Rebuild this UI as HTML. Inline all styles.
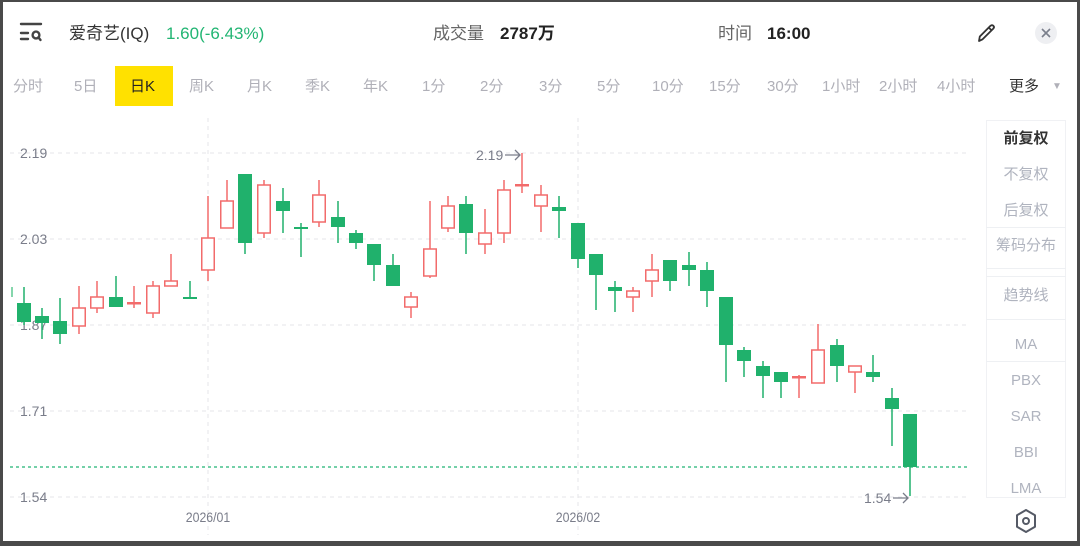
<!DOCTYPE html>
<html><head><meta charset="utf-8">
<style>
*{margin:0;padding:0;box-sizing:border-box}
html,body{width:1080px;height:546px;overflow:hidden;background:#fff}
body{font-family:"Liberation Sans","Noto Sans CJK SC",sans-serif;position:relative}
.frame{position:absolute;left:0;top:0;width:1080px;height:546px;border:3px solid #4a4a4a;border-bottom-width:5px;border-top-width:2px;pointer-events:none}
.t{position:absolute;white-space:nowrap;line-height:1}
.tab{position:absolute;top:79px;font-size:15px;color:#b0b0b8;line-height:1;white-space:nowrap}
.side{position:absolute;left:986px;width:80px;text-align:center;font-size:15px;color:#b0b4bf;line-height:1}
.sep{position:absolute;left:986px;width:80px;height:1px;background:#eef0f3}
</style></head><body>
<svg class="t" style="left:18px;top:20px" width="26" height="24" viewBox="0 0 26 24">
<g stroke="#444" stroke-width="2.4" stroke-linecap="round" fill="none">
<line x1="3" y1="4" x2="23" y2="4"/><line x1="3" y1="13" x2="10" y2="13"/><line x1="3" y1="19" x2="10" y2="19"/>
<circle cx="18" cy="15" r="3.4"/><line x1="20.5" y1="17.5" x2="22.5" y2="20"/></g></svg>
<div class="t" style="left:69px;top:25px;font-size:17px;color:#333">爱奇艺(IQ)</div>
<div class="t" style="left:166px;top:25px;font-size:17px;color:#22b573">1.60(-6.43%)</div>
<div class="t" style="left:433px;top:25px;font-size:17px;color:#666">成交量</div>
<div class="t" style="left:500px;top:25px;font-size:17px;color:#222;font-weight:bold">2787万</div>
<div class="t" style="left:718px;top:25px;font-size:17px;color:#666">时间</div>
<div class="t" style="left:767px;top:25px;font-size:17px;color:#222;font-weight:bold">16:00</div>
<svg class="t" style="left:974px;top:21px" width="24" height="24" viewBox="0 0 24 24">
<path d="M5 20 L5.8 15.5 L16.5 4.8 Q18 3.5 19.4 4.8 Q20.6 6.2 19.3 7.6 L8.6 18.3 Z M14.8 6.6 L17.6 9.4" fill="none" stroke="#333" stroke-width="1.8" stroke-linejoin="round"/></svg>
<div class="t" style="left:1035px;top:22px;width:22px;height:22px;border-radius:50%;background:#eeeff2"></div>
<svg class="t" style="left:1040px;top:27px" width="12" height="12" viewBox="0 0 12 12"><path d="M2 2L10 10M10 2L2 10" stroke="#7a7f8c" stroke-width="1.6"/></svg>

<div class="t" style="left:115px;top:66px;width:58px;height:40px;background:#ffe100"></div>
<div class="tab" style="left:13px">分时</div>
<div class="tab" style="left:74px">5日</div>
<div class="tab" style="left:130px;color:#222">日K</div>
<div class="tab" style="left:189px">周K</div>
<div class="tab" style="left:247px">月K</div>
<div class="tab" style="left:305px">季K</div>
<div class="tab" style="left:363px">年K</div>
<div class="tab" style="left:422px">1分</div>
<div class="tab" style="left:480px">2分</div>
<div class="tab" style="left:539px">3分</div>
<div class="tab" style="left:597px">5分</div>
<div class="tab" style="left:652px">10分</div>
<div class="tab" style="left:709px">15分</div>
<div class="tab" style="left:767px">30分</div>
<div class="tab" style="left:822px">1小时</div>
<div class="tab" style="left:879px">2小时</div>
<div class="tab" style="left:937px">4小时</div>
<div class="tab" style="left:1009px;color:#333">更多</div>
<div class="tab" style="left:1052px;font-size:10px;top:82px">▼</div>

<svg class="t" style="left:0;top:0" width="980" height="546" viewBox="0 0 980 546">
<g stroke="#e6e6e9" stroke-width="1" stroke-dasharray="4 4">
<line x1="10" y1="153" x2="970" y2="153"/><line x1="10" y1="239" x2="970" y2="239"/>
<line x1="10" y1="325" x2="970" y2="325"/><line x1="10" y1="411" x2="970" y2="411"/>
<line x1="10" y1="497" x2="970" y2="497"/>
<line x1="208" y1="118" x2="208" y2="535"/><line x1="578" y1="118" x2="578" y2="535"/>
</g>
<g font-family="Liberation Sans, sans-serif" font-size="14" fill="#7a7d8a">
<text x="20" y="158">2.19</text><text x="20" y="244">2.03</text><text x="20" y="330">1.87</text>
<text x="20" y="416">1.71</text><text x="20" y="502">1.54</text>
<text transform="translate(208 522) scale(0.88 1)" text-anchor="middle">2026/01</text><text transform="translate(578 522) scale(0.88 1)" text-anchor="middle">2026/02</text>
<text x="476" y="160">2.19</text><text x="864" y="503">1.54</text>
</g>
<g fill="none" stroke="#7a7d8a" stroke-width="1.3">
<path d="M505 155 H520 M515 150 L520 155 L515 160"/>
<path d="M893 498 H908 M903 493 L908 498 L903 503"/>
</g>
<line x1="10" y1="467" x2="970" y2="467" stroke="#22b573" stroke-width="1.3" stroke-dasharray="3 3"/>
<g id="c"></g>
</svg>
<script>
var d=[[12,287,297,296,297,'g'],[24,287,325,303,322,'g'],[42,308,339,316,323,'g'],[60,298,344,321,334,'g'],[79,286,334,308,326,'r'],[97,281,313,297,308,'r'],[116,276,307,297,307,'g'],[134,286,308,302,304,'R'],[153,281,318,286,313,'r'],[171,254,286,281,286,'r'],[190,281,299,297,299,'g'],[208,196,281,238,270,'r'],[227,180,228,201,228,'r'],[245,174,254,174,243,'g'],[264,180,238,185,233,'r'],[283,188,233,201,211,'g'],[301,223,257,227,229,'g'],[319,180,227,195,222,'r'],[338,201,243,217,227,'g'],[356,230,249,233,243,'g'],[374,244,281,244,265,'g'],[393,254,286,265,286,'g'],[411,292,318,297,307,'r'],[430,201,278,249,276,'r'],[448,196,232,206,228,'r'],[466,196,254,204,233,'g'],[485,209,254,233,244,'r'],[504,180,243,190,233,'r'],[522,153,193,184,186,'R'],[541,185,232,195,206,'r'],[559,196,238,207,211,'g'],[578,223,268,223,259,'g'],[596,254,310,254,275,'g'],[615,281,312,287,291,'g'],[633,287,312,291,297,'r'],[652,254,297,270,281,'r'],[670,260,291,260,281,'g'],[689,252,286,265,270,'g'],[707,262,307,270,291,'g'],[726,297,382,297,345,'g'],[744,347,377,350,361,'g'],[763,361,398,366,376,'g'],[781,372,398,372,382,'g'],[799,375,398,376,378,'R'],[818,324,383,350,383,'r'],[837,339,382,345,366,'g'],[855,366,393,366,372,'r'],[873,355,382,372,377,'g'],[892,388,446,398,409,'g'],[910,414,496,414,467,'g']];
var s='';d.forEach(function(c,i){var x=c[0],G='#20b16c',R='#f26b6b';
if(i==0){s+='<line x1="12" y1="287" x2="12" y2="297" stroke="#5cc890" stroke-width="1.5"/>';return;}
if(c[5]=='g'){s+='<line x1="'+x+'" y1="'+c[1]+'" x2="'+x+'" y2="'+c[2]+'" stroke="'+G+'" stroke-width="1.5"/><rect x="'+(x-7)+'" y="'+c[3]+'" width="14" height="'+Math.max(2,c[4]-c[3])+'" fill="'+G+'"/>';}
else if(c[5]=='R'){s+='<line x1="'+x+'" y1="'+c[1]+'" x2="'+x+'" y2="'+c[2]+'" stroke="'+R+'" stroke-width="1.5"/><rect x="'+(x-7)+'" y="'+c[3]+'" width="14" height="2.5" fill="'+R+'"/>';}
else{s+='<line x1="'+x+'" y1="'+c[1]+'" x2="'+x+'" y2="'+c[2]+'" stroke="'+R+'" stroke-width="1.5"/><rect x="'+(x-6.25)+'" y="'+c[3]+'" width="12.5" height="'+(c[4]-c[3])+'" fill="#fff" stroke="'+R+'" stroke-width="1.5"/>';}});
document.getElementById('c').innerHTML=s;
</script>

<div class="t" style="left:986px;top:120px;width:80px;height:378px;border:1px solid #f0f1f4"></div>
<div class="side" style="top:131px;color:#333;font-weight:bold">前复权</div>
<div class="side" style="top:167px">不复权</div>
<div class="side" style="top:203px">后复权</div>
<div class="sep" style="top:227px"></div>
<div class="side" style="top:238px">筹码分布</div>
<div class="sep" style="top:268px"></div>
<div class="sep" style="top:276px"></div>
<div class="side" style="top:288px">趋势线</div>
<div class="sep" style="top:319px"></div>
<div class="side" style="top:337px">MA</div>
<div class="sep" style="top:361px"></div>
<div class="side" style="top:373px">PBX</div>
<div class="side" style="top:409px">SAR</div>
<div class="side" style="top:445px">BBI</div>
<div class="side" style="top:481px">LMA</div>
<svg class="t" style="left:1013px;top:507px" width="26" height="28" viewBox="0 0 26 28">
<path d="M13 3 L22 8.2 L22 19.8 L13 25 L4 19.8 L4 8.2 Z" fill="none" stroke="#555a66" stroke-width="2" stroke-linejoin="round"/>
<circle cx="13" cy="14" r="3" fill="none" stroke="#555a66" stroke-width="2"/></svg>
<div class="frame"></div>
</body></html>
